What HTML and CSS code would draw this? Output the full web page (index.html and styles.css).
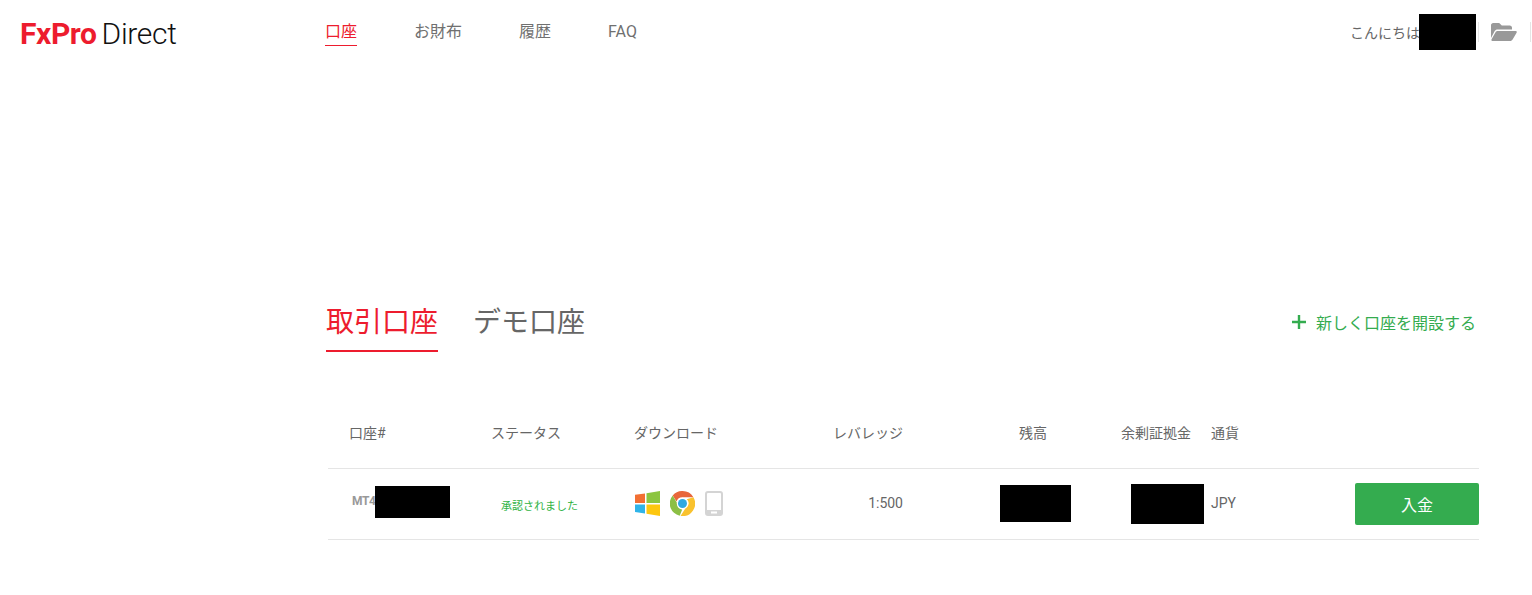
FILE: index.html
```html
<!DOCTYPE html>
<html lang="ja">
<head>
  <meta charset="UTF-8">
  <title>FxPro Direct</title>
  <meta name="viewport" content="width=device-width,initial-scale=1">
  <link rel="stylesheet" href="styles.css">
</head>
<body>

<header class="top">
  <a class="logo" href="#"><b>FxPro</b><span>Direct</span></a>
  <nav class="nav">
    <a class="nav-item active" href="#">口座</a>
    <a class="nav-item" href="#">お財布</a>
    <a class="nav-item" href="#">履歴</a>
    <a class="nav-item" href="#">FAQ</a>
  </nav>
  <div class="user">
    <span class="hello">こんにちは</span>
    <span class="mask mask-user"></span>
    <span class="sep"></span>
    <svg class="folder" width="26" height="18" viewBox="0 0 26 18">
      <path fill="#999" d="M0 15V2.2C0 1 1 0 2.2 0h6l2.6 2.6h8c1.2 0 2.2 1 2.2 2.2V6.500H6.500c-1.200 0-2.200.6-2.800 1.600z"/>
      <path fill="#999" d="M6.600 8h18c1 0 1.500.9 1 1.700l-4 6.800c-.5.9-1.400 1.500-2.500 1.500H1.600C.6 18 .1 17.100.6 16.300l3.800-6.800C4.900 8.500 5.600 8 6.600 8z"/>
    </svg>
    <span class="sep sep-last"></span>
  </div>
</header>

<main class="main">
  <div class="tabs-row">
    <div class="tabs">
      <a class="tab active" href="#">取引口座</a>
      <a class="tab" href="#">デモ口座</a>
    </div>
    <a class="new-account" href="#">
      <svg width="14" height="14" viewBox="0 0 14 14"><path fill="#34ac4f" d="M5.800 0h2.400v5.800H14v2.400H8.200V14H5.800V8.200H0V5.800h5.800z"/></svg>
      新しく口座を開設する
    </a>
  </div>

  <div class="table">
    <div class="row head">
      <div class="cell c-acc">口座#</div>
      <div class="cell c-status">ステータス</div>
      <div class="cell c-dl">ダウンロード</div>
      <div class="cell c-lev">レバレッジ</div>
      <div class="cell c-bal">残高</div>
      <div class="cell c-free">余剰証拠金</div>
      <div class="cell c-cur">通貨</div>
      <div class="cell c-act"></div>
    </div>
    <div class="row">
      <div class="cell c-acc"><span class="mt4">MT4</span><span class="mask mask-acc"></span></div>
      <div class="cell c-status"><span class="approved">承認されました</span></div>
      <div class="cell c-dl icons">
        <svg class="win" width="25" height="25" viewBox="0 0 25 25">
          <path fill="#f26f33" d="M0 3.800l10-1.400V12H0z"/>
          <path fill="#8cc540" d="M11.500 2.200L25 0v12H11.500z"/>
          <path fill="#2fb4e9" d="M0 13.500h10v9L0 21z"/>
          <path fill="#fdc70f" d="M11.500 13.500H25V25l-13.500-2.300z"/>
        </svg>
        <svg width="25" height="25" viewBox="0 0 25 25">
          <path fill="#e8663a" d="M12.500 0a12.500 12.500 0 0 1 10.900 6.300H12.500a6.300 6.300 0 0 0-6 4.300L2.700 4.400A12.500 12.500 0 0 1 12.500 0z"/>
          <path fill="#8cbf45" d="M2.700 4.400l4.900 8.500a5 5 0 0 0 4.600 5.600L9.700 24.700A12.500 12.500 0 0 1 2.700 4.400z"/>
          <path fill="#f9c22e" d="M23.400 6.300A12.500 12.500 0 0 1 10.500 24.900l5.300-8.200a5 5 0 0 0 .9-8.400z"/>
          <circle cx="12.500" cy="12.500" r="5.700" fill="#fff"/>
          <circle cx="12.500" cy="12.500" r="4.500" fill="#2fa8e0"/>
        </svg>
        <svg width="18" height="25" viewBox="0 0 18 25">
          <rect x="1" y="1" width="16" height="23" rx="2" fill="#fff" stroke="#d4d4d4" stroke-width="2"/>
          <rect x="1" y="19" width="16" height="5" fill="#d4d4d4"/>
          <rect x="6" y="20.500" width="6" height="2" fill="#fff"/>
        </svg>
      </div>
      <div class="cell c-lev"><span class="num">1:500</span></div>
      <div class="cell c-bal"><span class="mask mask-bal"></span></div>
      <div class="cell c-free"><span class="mask mask-free"></span></div>
      <div class="cell c-cur"><span class="num">JPY</span></div>
      <div class="cell c-act"><button class="deposit">入金</button></div>
    </div>
  </div>
</main>

</body>
</html>
```

FILE: styles.css
```css
* { box-sizing: border-box; }
html, body { overflow: hidden; }
body {
  margin: 0;
  background: #fff;
  color: #666;
  font-family: Roboto, "Noto Sans CJK JP", sans-serif;
  font-size: 14px;
}
a { color: inherit; text-decoration: none; }

.top {
  display: flex;
  align-items: flex-start;
  height: 68px;
  padding-left: 20px;
}
.logo {
  display: flex;
  width: 306px;
  margin-top: 16px;
  font-size: 30px;
  line-height: 36px;
  color: #111;
}
.logo b {
  color: #ed1c2e;
  font-weight: 700;
  letter-spacing: -0.4px;
  margin-right: 5px;
}
.logo span { font-weight: 300; letter-spacing: -0.3px; }

.nav { display: flex; gap: 57px; margin-top: 20px; margin-left: -1px; }
.nav-item {
  height: 26px;
  font-size: 16px;
  line-height: 24px;
  color: #707070;
}
.nav-item.active {
  color: #ed1c2e;
  border-bottom: 1px solid #ed1c2e;
}

.user {
  display: flex;
  align-items: center;
  margin-left: auto;
  margin-top: 14px;
  height: 36px;
}
.hello { line-height: 36px; margin-top: 1px; width: 69px; white-space: nowrap; }
.mask { display: block; background: #000; }
.mask-user { width: 57px; height: 36px; }
.sep { width: 1px; height: 20px; margin: 0 0 0 2px; background: #e5e5e5; flex: none; }
.sep-last { margin: 0 1px 0 0; }
.folder { margin: 0 13px 0 12px; }

.main { padding: 0 53px 0 326px; }
.tabs-row {
  display: flex;
  align-items: flex-start;
  justify-content: space-between;
  margin-top: 224px;
}
.tabs { display: flex; gap: 35px; }
.tab {
  height: 60px;
  padding-top: 3px;
  font-size: 28px;
  line-height: 56px;
  color: #666;
}
.tab.active {
  color: #ed1c2e;
  border-bottom: 2px solid #ed1c2e;
}
.new-account {
  display: flex;
  align-items: center;
  gap: 10px;
  height: 60px;
  padding-right: 3px;
  font-size: 16px;
  color: #34ac4f;
}

.table { margin: 57px 0 0 2px; }
.row {
  display: grid;
  grid-template-columns: 142px 143px 167px 123px 218px 90px 1fr 124px;
  align-items: center;
  height: 71px;
  padding-bottom: 1px;
  border-bottom: 1px solid #e5e5e5;
}
.row.head { height: 60px; padding-bottom: 14px; }
.c-acc { display: flex; align-items: center; padding-left: 21px; padding-bottom: 4px; }
.head .c-acc { padding-bottom: 0; }
.c-status { padding-left: 21px; }
.c-dl { padding-left: 21px; }
.c-lev { text-align: right; }
.c-bal { padding-left: 97px; }
.head .c-bal { padding-left: 116px; }
.c-free { padding-left: 10px; white-space: nowrap; }
.head .c-free { padding-left: 0; }
.c-cur { white-space: nowrap; }
.num { display: block; padding-bottom: 2px; }

.mt4 {
  width: 26px;
  padding-left: 3px;
  margin-bottom: 2px;
  font-size: 12px;
  font-weight: 700;
  color: #999;
  letter-spacing: -0.4px;
  white-space: nowrap;
  overflow: hidden;
}
.mask-acc { width: 75px; height: 32px; }
.approved {
  display: block;
  padding: 2px 0 0 10px;
  font-size: 11px;
  color: #2fb344;
  white-space: nowrap;
}
.icons { display: flex; align-items: center; gap: 10px; }
.win { margin-left: 1px; }
.mask-bal { width: 71px; height: 37px; }
.mask-free { width: 73px; height: 40px; }
.deposit {
  display: block;
  width: 124px;
  height: 42px;
  padding: 0;
  border: 0;
  border-radius: 2px;
  background: #34ac4f;
  color: #fff;
  font: 16px Roboto, "Noto Sans CJK JP", sans-serif;
  cursor: pointer;
}
```
